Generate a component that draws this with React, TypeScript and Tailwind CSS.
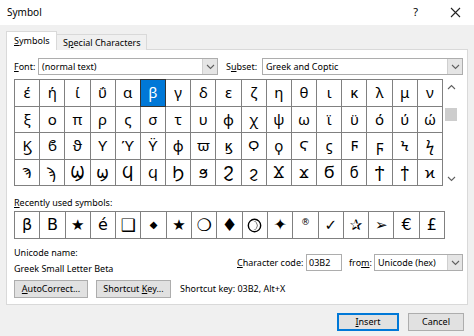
import React from "react";

const rows = [
  "έήίΰαβγδεζηθικλμν",
  "ξοπρςστυφχψωϊϋόύώ",
  "ϏϐϑϒϓϔϕϖϗϘϙϚϛϜϝϞϟ",
  "ϠϡϢϣϤϥϦϧϨϩϪϫϬϭϮϯϰ",
];

function Chevron({ up = false }: { up?: boolean }) {
  return (
    <svg width="9" height="6" viewBox="0 0 9 6">
      <polyline
        points={up ? "1,5 4.5,1.5 8,5" : "1,1 4.5,4.5 8,1"}
        fill="none"
        stroke="#606060"
        strokeWidth="1.1"
      />
    </svg>
  );
}

function Combo({ w, text }: { w: string; text: string }) {
  return (
    <div className={`${w} h-[17px] border border-[#adadad] bg-white flex items-center shrink-0`}>
      <span className="flex-1 pl-[3px] leading-none whitespace-nowrap">{text}</span>
      <div className="w-[15px] h-full bg-[#e5e5e5] border-l border-[#cfcfcf] flex items-center justify-center">
        <Chevron />
      </div>
    </div>
  );
}

function Moon() {
  return (
    <svg width="15" height="15" viewBox="0 0 16 16">
      <circle cx="8" cy="8" r="6.6" fill="none" stroke="#000" strokeWidth="1.5" />
      <path d="M7 3.2 A5 5 0 0 1 7 12.8 A4 4.6 0 0 0 7 3.2 Z" fill="#000" />
    </svg>
  );
}

export default function App() {
  const recent: React.ReactNode[] = [
    <span className="text-[16px]">β</span>,
    <span className="text-[16px]">B</span>,
    <span className="text-[15px]">★</span>,
    <span className="text-[16px]">é</span>,
    <span className="text-[17px]">❑</span>,
    <span className="text-[10px]">◆</span>,
    <span className="text-[15px]">★</span>,
    <span className="text-[17px]">❍</span>,
    <span className="text-[18px]">♦</span>,
    <Moon />,
    <span className="text-[16px]">✦</span>,
    <span className="text-[9px] -mt-[6px]">®</span>,
    <span className="text-[15px]">✓</span>,
    <span className="text-[15px]">✰</span>,
    <span className="text-[15px]">➢</span>,
    <span className="text-[16px]">€</span>,
    <span className="text-[16px]">£</span>,
  ];

  return (
    <div className="w-[474px] h-[336px] bg-[#f0f0f0] text-[9px] text-black font-['Noto_Sans',sans-serif] flex flex-col overflow-hidden whitespace-nowrap">
      {/* title bar */}
      <div className="h-[25px] bg-white flex items-center pl-[7px] pr-[13px] shrink-0">
        <span className="text-[10px] flex-1">Symbol</span>
        <span className="text-[11px] mr-[32px]">?</span>
        <svg width="11" height="11" viewBox="0 0 11 11">
          <path d="M1 1 L10 10 M10 1 L1 10" stroke="#222" strokeWidth="1.1" />
        </svg>
      </div>

      {/* tabs */}
      <div className="flex items-end pl-[6px] mt-[6px] h-[19px] shrink-0 relative z-10">
        <div className="w-[51px] h-[19px] bg-white border border-b-0 border-[#d9d9d9] flex items-center pl-[7px]">
          <span>
            <u>S</u>ymbols
          </span>
        </div>
        <div className="w-[90px] h-[16px] bg-[#f0f0f0] border border-l-0 border-b-0 border-[#d9d9d9] flex items-center pl-[6px]">
          <span>
            S<u>p</u>ecial Characters
          </span>
        </div>
      </div>

      {/* panel */}
      <div className="ml-[6px] -mt-px w-[462px] h-[256px] bg-white border border-[#d9d9d9] shrink-0 pl-[7px] pt-[8px] flex flex-col">
        <div className="flex items-center h-[17px]">
          <span className="w-[24px]">
            <u>F</u>ont:
          </span>
          <Combo w="w-[180px]" text="(normal text)" />
          <span className="ml-[8px] w-[36px]">
            S<u>u</u>bset:
          </span>
          <Combo w="w-[201px]" text="Greek and Coptic" />
        </div>

        {/* grid + scrollbar */}
        <div className="flex mt-[4px] h-[107px]">
          <div className="w-[429px] h-[107px] bg-[#808080] p-px gap-px grid grid-cols-[repeat(17,minmax(0,1fr))] grid-rows-4 font-['Noto_Sans','DejaVu_Sans',sans-serif] text-[15px]">
            {rows.flatMap((r, ri) =>
              Array.from(r).map((c, ci) => {
                const sel = ri === 0 && ci === 5;
                return (
                  <div
                    key={`${ri}-${ci}`}
                    className={
                      sel
                        ? "bg-[#0078d7] text-white flex items-center justify-center leading-none outline outline-1 outline-[#333]"
                        : "bg-white flex items-center justify-center leading-none"
                    }
                  >
                    {c}
                  </div>
                );
              })
            )}
          </div>
          <div className="w-[16px] h-full flex flex-col items-center bg-white">
            <div className="h-[16px] flex items-center justify-center">
              <Chevron up />
            </div>
            <div className="mt-[13px] w-[12px] h-[13px] bg-[#cdcdcd]" />
            <div className="flex-1" />
            <div className="h-[14px] flex items-center justify-center">
              <Chevron />
            </div>
          </div>
        </div>

        <div className="mt-[11px] h-[12px] flex items-center">
          <span>
            <u>R</u>ecently used symbols:
          </span>
        </div>
        <div className="mt-[2px] w-[431px] h-[28px] bg-[#808080] p-px gap-px grid grid-cols-[repeat(17,minmax(0,1fr))] font-['DejaVu_Sans','Noto_Sans',sans-serif]">
          {recent.map((n, i) => (
            <div key={i} className="bg-white flex items-center justify-center leading-none">
              {n}
            </div>
          ))}
        </div>

        {/* unicode info */}
        <div className="flex mt-[6px] h-[32px]">
          <div className="w-[223px] flex flex-col">
            <span className="h-[15px] leading-[15px]">Unicode name:</span>
            <span className="h-[15px] leading-[15px] mt-[1px]">Greek Small Letter Beta</span>
          </div>
          <div className="flex items-center h-[17px] mt-[9px]">
            <span className="w-[69px]">
              <u>C</u>haracter code:
            </span>
            <div className="w-[36px] h-[17px] border border-[#adadad] flex items-center pl-[2px] shrink-0">
              03B2
            </div>
            <span className="ml-[7px] w-[25px]">
              fro<u>m</u>:
            </span>
            <Combo w="w-[89px]" text="Unicode (hex)" />
          </div>
        </div>

        {/* buttons */}
        <div className="flex items-center mt-[3px] h-[18px]">
          <div className="w-[74px] h-[18px] bg-[#e1e1e1] border border-[#adadad] flex items-center justify-center">
            <span>
              <u>A</u>utoCorrect...
            </span>
          </div>
          <div className="ml-[8px] w-[75px] h-[18px] bg-[#e1e1e1] border border-[#adadad] flex items-center justify-center">
            <span>
              Shortcut <u>K</u>ey...
            </span>
          </div>
          <span className="ml-[9px]">Shortcut key: 03B2, Alt+X</span>
        </div>
      </div>

      {/* bottom buttons */}
      <div className="flex justify-end pr-[10px] mt-[8px]">
        <div className="w-[62px] h-[18px] bg-[#e1e1e1] border-2 border-[#0078d7] flex items-center justify-center">
          <span>
            <u>I</u>nsert
          </span>
        </div>
        <div className="ml-[9px] w-[56px] h-[18px] bg-[#e1e1e1] border border-[#adadad] flex items-center justify-center">
          Cancel
        </div>
      </div>
    </div>
  );
}
